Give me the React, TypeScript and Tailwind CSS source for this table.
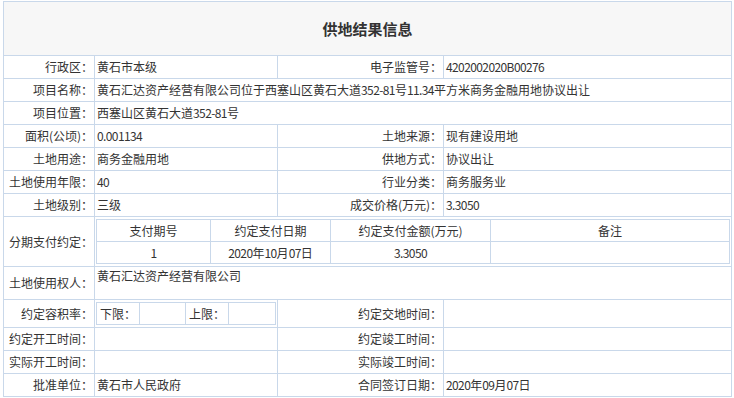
import React from "react";

const bd = "border border-[#c9d8ea]";
const font = { fontFamily: '"Noto Sans CJK SC", "Noto Sans", sans-serif' };

function N({ children }: { children: React.ReactNode }) {
  return <span className="tracking-[-0.6px]">{children}</span>;
}

function Lab({ children, rowSpan, cls = "" }: { children: React.ReactNode; rowSpan?: number; cls?: string }) {
  return (
    <td rowSpan={rowSpan} className={`${bd} text-right pr-[1px] pl-0 whitespace-nowrap align-middle ${cls}`}>
      {children}
    </td>
  );
}

function Val({ children, colSpan, cls = "" }: { children?: React.ReactNode; colSpan?: number; cls?: string }) {
  return (
    <td colSpan={colSpan} className={`${bd} pl-[2px] whitespace-nowrap align-middle ${cls}`}>
      {children}
    </td>
  );
}

export default function App() {
  return (
    <div className="w-[734px] h-[398px] bg-white pt-[1px] pl-[3px] text-[12px] leading-[14px] text-[#333]" style={font}>
      <table className="w-[728px] table-fixed border-collapse">
        <colgroup>
          <col className="w-[91px]" />
          <col className="w-[183px]" />
          <col className="w-[166px]" />
          <col className="w-[288px]" />
        </colgroup>
        <tbody>
          <tr className="h-[54px]">
            <td colSpan={4} className={`${bd} bg-[#f7f7f7] text-center text-[15px] font-bold text-[#333]`}>
              供地结果信息
            </td>
          </tr>
          <tr className="h-[23px]">
            <Lab>行政区：</Lab>
            <Val>黄石市本级</Val>
            <Lab>电子监管号：</Lab>
            <Val><N>4202002020B00276</N></Val>
          </tr>
          <tr className="h-[23px]">
            <Lab>项目名称：</Lab>
            <Val colSpan={3}>黄石汇达资产经营有限公司位于西塞山区黄石大道<N>352-81</N>号<N>11.34</N>平方米商务金融用地协议出让</Val>
          </tr>
          <tr className="h-[23px]">
            <Lab>项目位置：</Lab>
            <Val colSpan={3}>西塞山区黄石大道<N>352-81</N>号</Val>
          </tr>
          <tr className="h-[23px]">
            <Lab>面积(公顷)：</Lab>
            <Val><N>0.001134</N></Val>
            <Lab>土地来源：</Lab>
            <Val>现有建设用地</Val>
          </tr>
          <tr className="h-[23px]">
            <Lab>土地用途：</Lab>
            <Val>商务金融用地</Val>
            <Lab>供地方式：</Lab>
            <Val>协议出让</Val>
          </tr>
          <tr className="h-[23px]">
            <Lab>土地使用年限：</Lab>
            <Val><N>40</N></Val>
            <Lab>行业分类：</Lab>
            <Val>商务服务业</Val>
          </tr>
          <tr className="h-[23px]">
            <Lab>土地级别：</Lab>
            <Val>三级</Val>
            <Lab>成交价格(万元)：</Lab>
            <Val><N>3.3050</N></Val>
          </tr>
          <tr className="h-[50px]">
            <Lab>分期支付约定：</Lab>
            <td colSpan={3} className={`${bd} px-[1px] py-[2px]`}>
              <table className="w-full table-fixed border-collapse text-center">
                <colgroup>
                  <col className="w-[114px]" />
                  <col className="w-[120px]" />
                  <col className="w-[160px]" />
                  <col />
                </colgroup>
                <tbody>
                  <tr className="h-[22px]">
                    <td className={bd}>支付期号</td>
                    <td className={bd}>约定支付日期</td>
                    <td className={bd}>约定支付金额(万元)</td>
                    <td className={bd}>备注</td>
                  </tr>
                  <tr className="h-[22px]">
                    <td className={bd}><N>1</N></td>
                    <td className={bd}><N>2020</N>年<N>10</N>月<N>07</N>日</td>
                    <td className={bd}><N>3.3050</N></td>
                    <td className={bd}></td>
                  </tr>
                </tbody>
              </table>
            </td>
          </tr>
          <tr className="h-[33px]">
            <Lab>土地使用权人：</Lab>
            <td colSpan={3} className={`${bd} pl-[2px] align-top pt-[2px]`}>黄石汇达资产经营有限公司</td>
          </tr>
          <tr className="h-[27px]">
            <Lab>约定容积率：</Lab>
            <td className={`${bd} px-[1px] py-[2px]`}>
              <table className="w-full table-fixed border-collapse">
                <colgroup>
                  <col className="w-[43px]" />
                  <col className="w-[46px]" />
                  <col className="w-[43px]" />
                  <col />
                </colgroup>
                <tbody>
                  <tr className="h-[22px]">
                    <td className={`${bd} text-center`}>下限：</td>
                    <td className={bd}></td>
                    <td className={`${bd} text-center`}>上限：</td>
                    <td className={bd}></td>
                  </tr>
                </tbody>
              </table>
            </td>
            <Lab>约定交地时间：</Lab>
            <Val />
          </tr>
          <tr className="h-[23px]">
            <Lab>约定开工时间：</Lab>
            <Val />
            <Lab>约定竣工时间：</Lab>
            <Val />
          </tr>
          <tr className="h-[23px]">
            <Lab>实际开工时间：</Lab>
            <Val />
            <Lab>实际竣工时间：</Lab>
            <Val />
          </tr>
          <tr className="h-[23px]">
            <Lab>批准单位：</Lab>
            <Val>黄石市人民政府</Val>
            <Lab>合同签订日期：</Lab>
            <Val><N>2020</N>年<N>09</N>月<N>07</N>日</Val>
          </tr>
        </tbody>
      </table>
    </div>
  );
}
